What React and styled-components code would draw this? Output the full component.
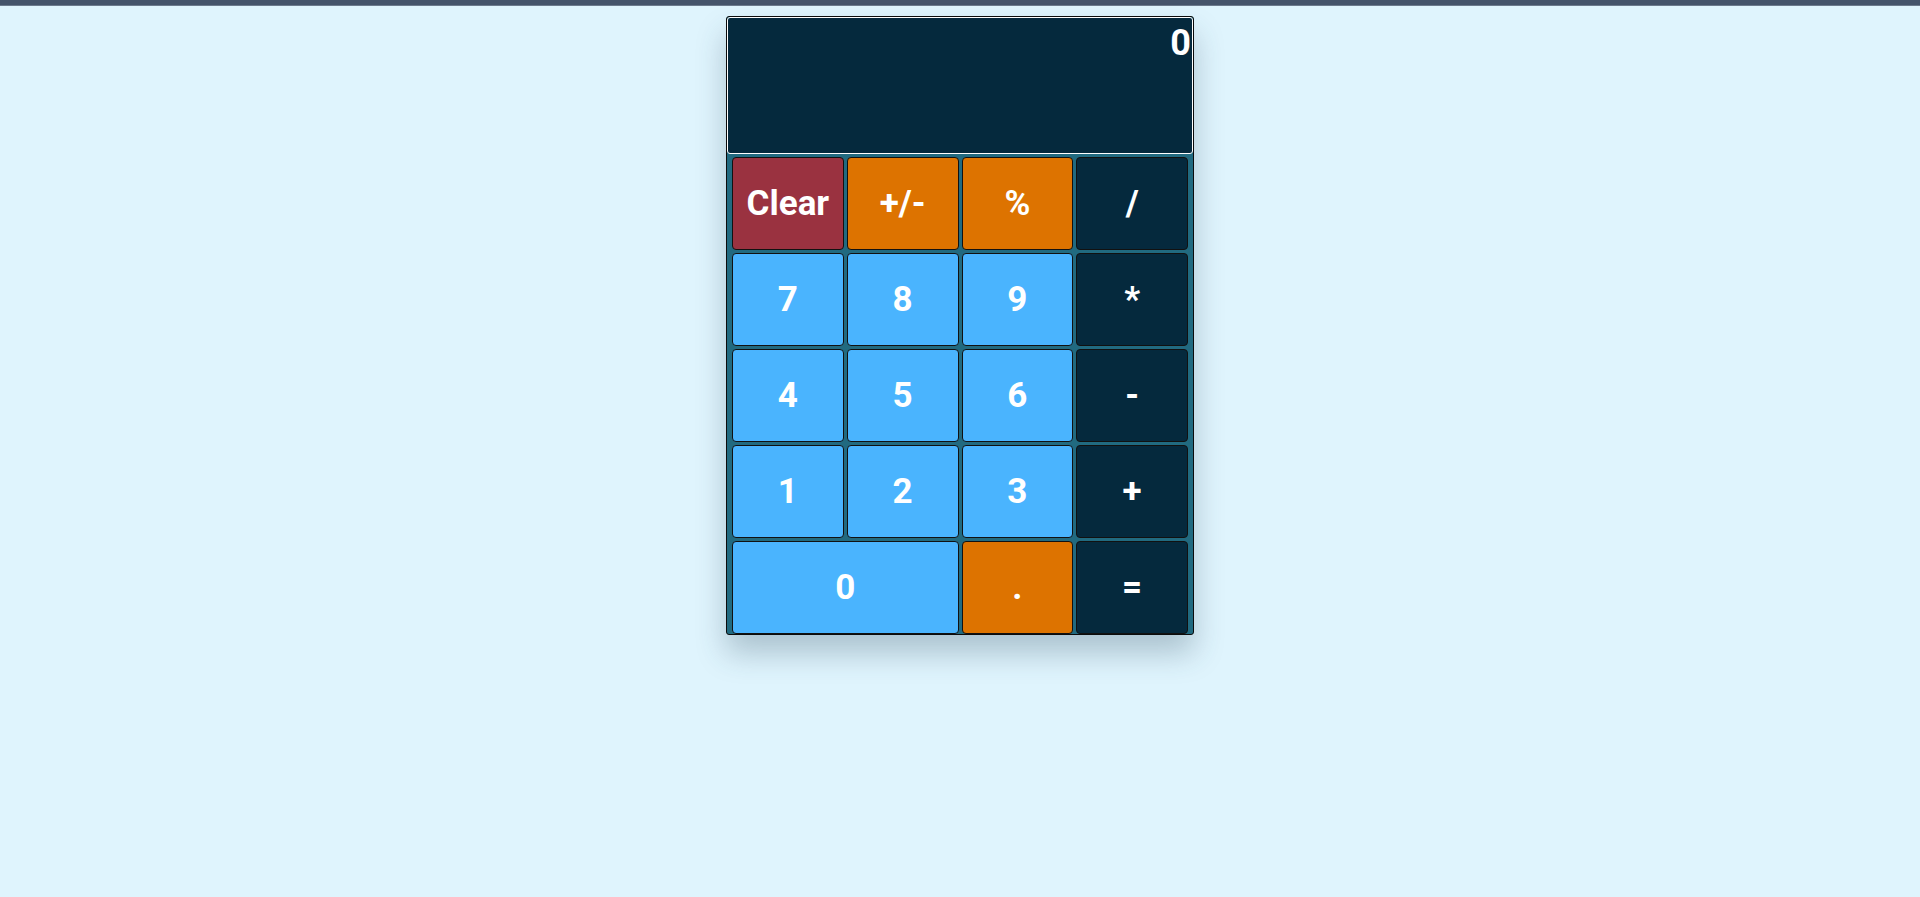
import styled, { createGlobalStyle } from "styled-components";

const Global = createGlobalStyle`
  html, body {
    margin: 0;
    background: #dff4fd;
    font-family: Roboto, "Open Sans", sans-serif;
  }
`;

const TopBar = styled.div`
  height: 5px;
  background: #45546a;
  border-bottom: 1px solid #6c7a8c;
`;

const Page = styled.main`
  display: flex;
  justify-content: center;
  padding-top: 10px;
  min-height: 880px;
`;

const Calc = styled.div`
  width: 466px;
  border: 1px solid #0b0b0b;
  border-radius: 3px;
  background: #216a80;
  box-shadow: 0 18px 30px rgba(40, 70, 90, 0.28);
  align-self: flex-start;
`;

const Display = styled.div`
  height: 137px;
  box-sizing: border-box;
  background: #05293d;
  border: 1px solid #fff;
  border-radius: 3px;
  color: #fff;
  font-size: 36px;
  font-weight: 700;
  text-align: right;
  padding: 4px 1px 0 0;
`;

const Keys = styled.div`
  display: grid;
  grid-template-columns: repeat(4, 1fr);
  grid-auto-rows: 93px;
  gap: 3px;
  padding: 3px 5px 0 5px;
`;

const colors = {
  num: "#4ab4fe",
  op: "#05293d",
  fn: "#dd7300",
  clear: "#9a3240",
};

const Key = styled.button`
  grid-column: span ${(p) => p.$span || 1};
  background: ${(p) => colors[p.$kind]};
  border: 1px solid #111;
  border-radius: 4px;
  color: #fff;
  font-family: Roboto, "Open Sans", sans-serif;
  font-weight: 700;
  font-size: 35px;
  padding: 0;
  cursor: pointer;
`;

const keys = [
  ["Clear", "clear"],
  ["+/-", "fn"],
  ["%", "fn"],
  ["/", "op"],
  ["7", "num"],
  ["8", "num"],
  ["9", "num"],
  ["*", "op"],
  ["4", "num"],
  ["5", "num"],
  ["6", "num"],
  ["-", "op"],
  ["1", "num"],
  ["2", "num"],
  ["3", "num"],
  ["+", "op"],
  ["0", "num", 2],
  [".", "fn"],
  ["=", "op"],
];

export default function App() {
  return (
    <>
      <Global />
      <TopBar />
      <Page>
        <Calc>
          <Display>0</Display>
          <Keys>
            {keys.map(([label, kind, span]) => (
              <Key key={label} $kind={kind} $span={span}>
                {label}
              </Key>
            ))}
          </Keys>
        </Calc>
      </Page>
    </>
  );
}
